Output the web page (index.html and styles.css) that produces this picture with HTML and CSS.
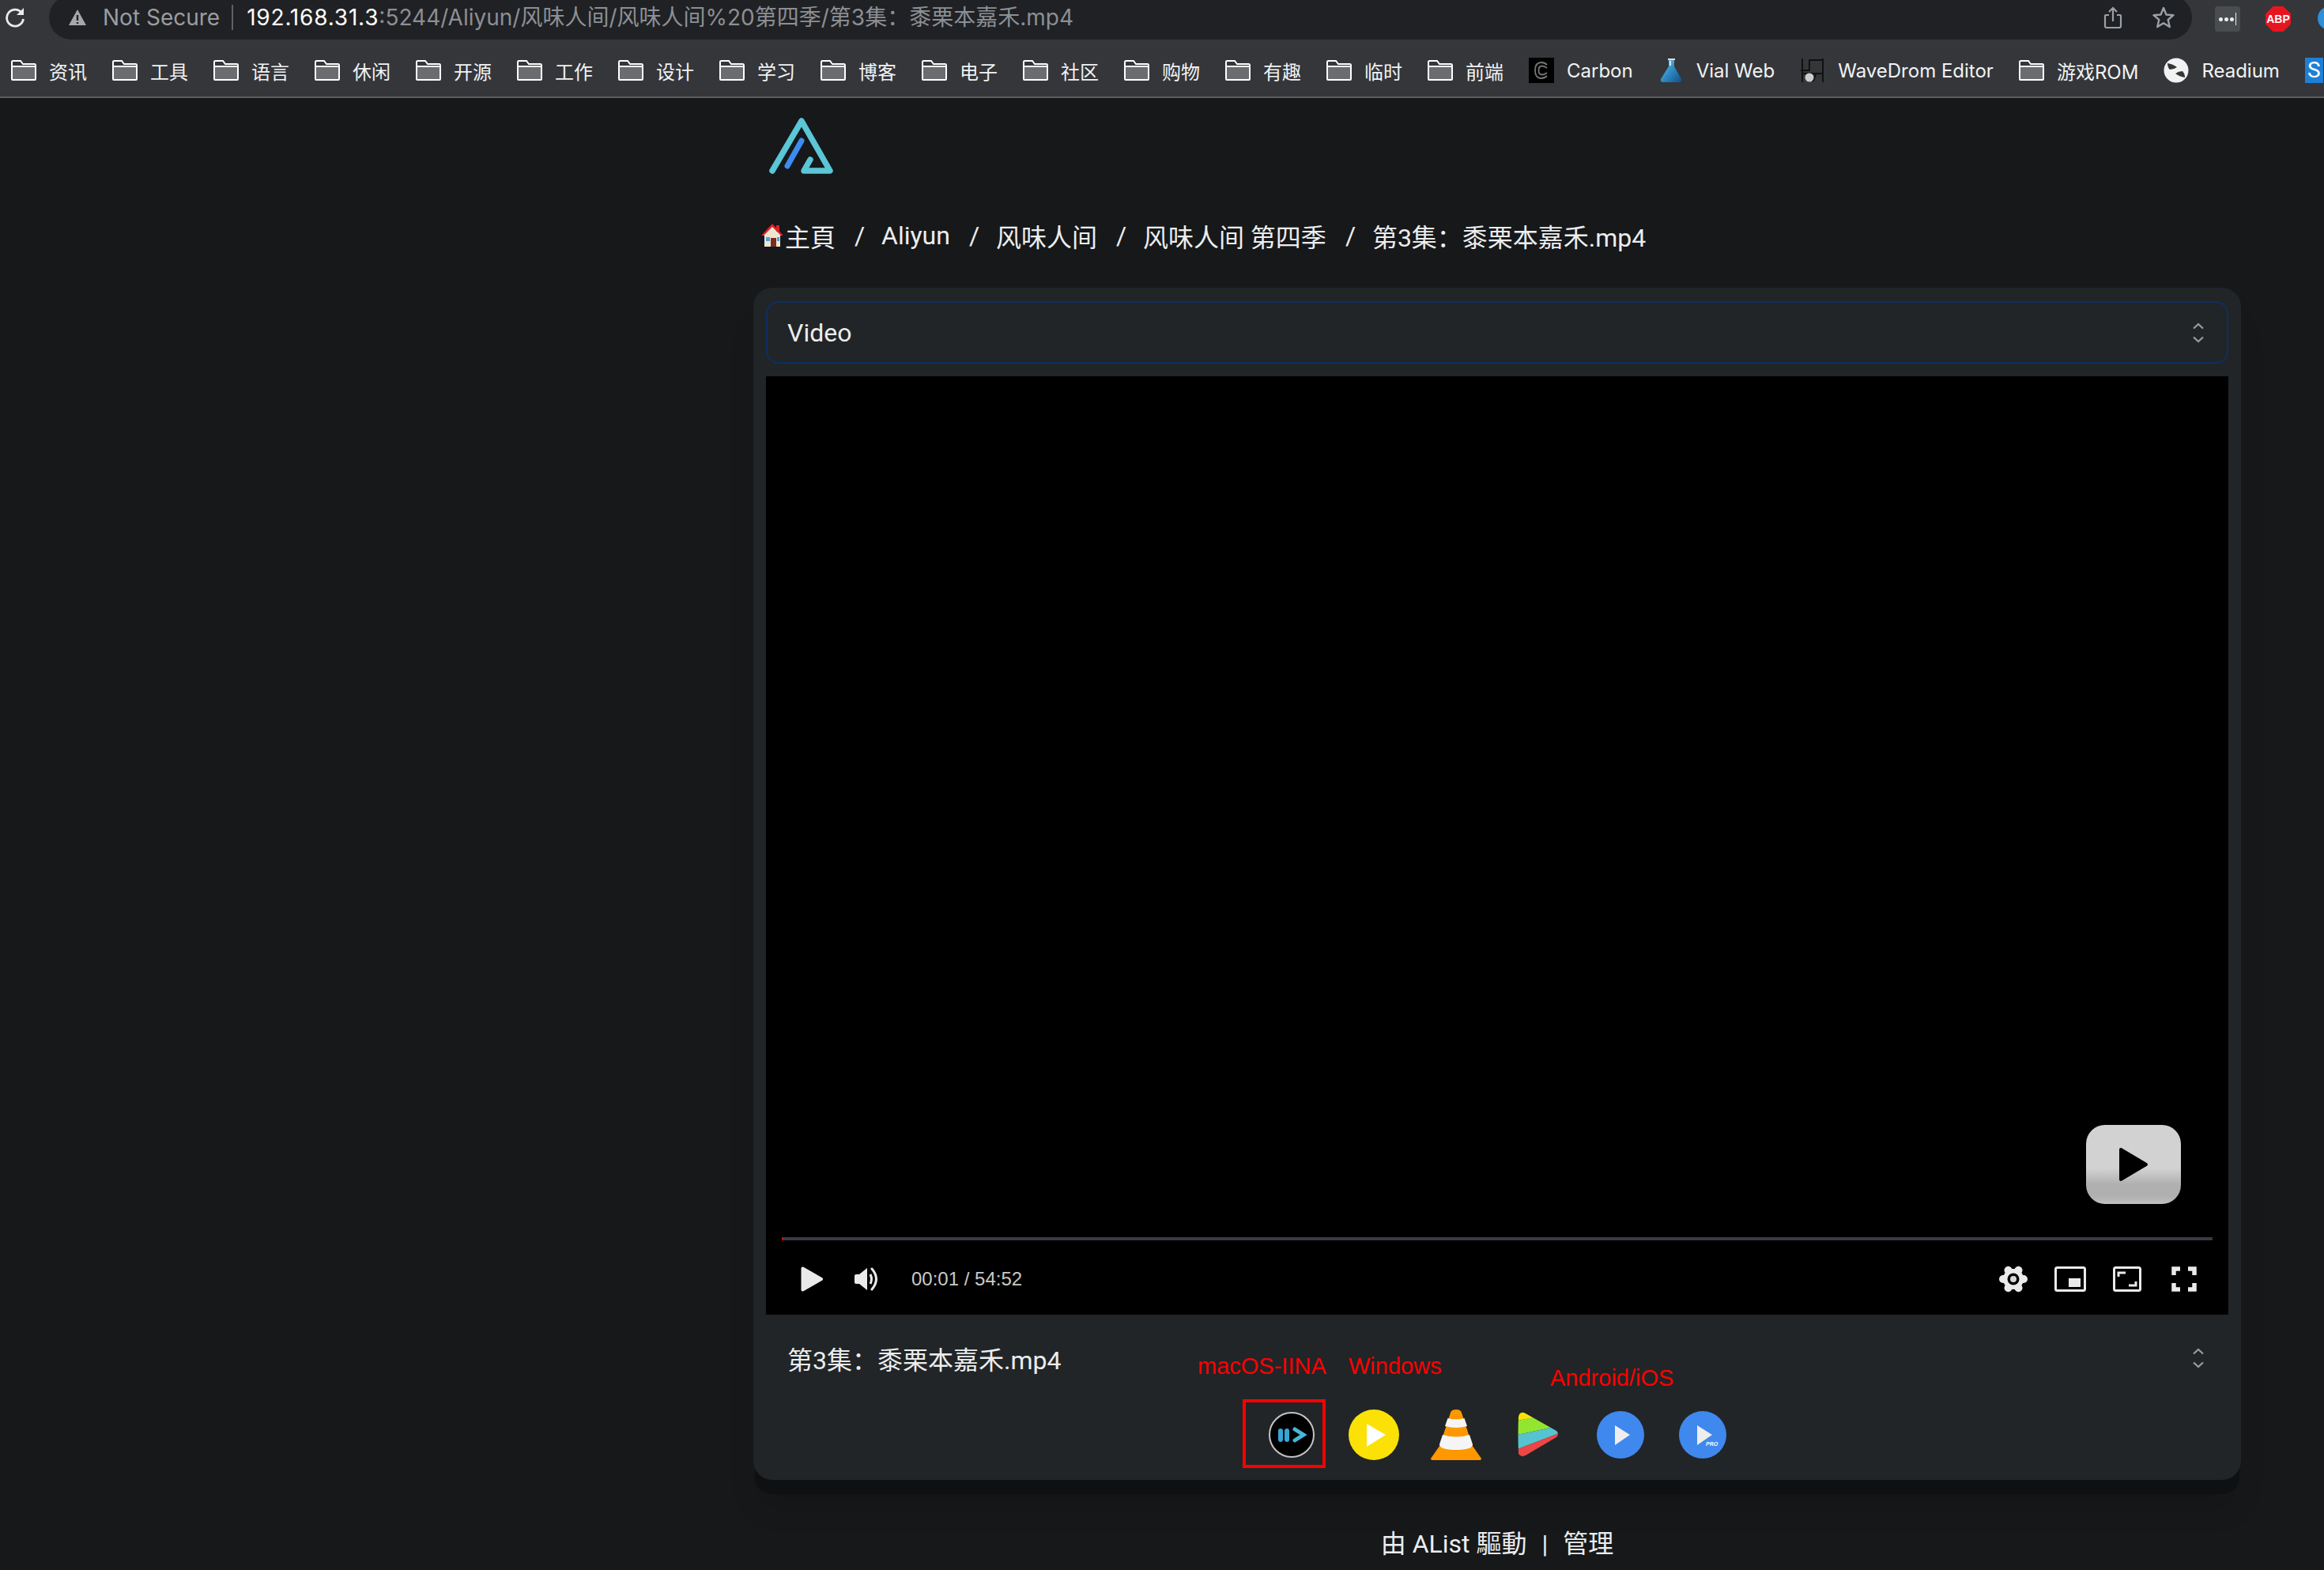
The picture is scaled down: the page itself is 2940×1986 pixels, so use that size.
FILE: index.html
```html
<!DOCTYPE html>
<html lang="zh">
<head>
<meta charset="utf-8">
<title>第3集：黍栗本嘉禾.mp4</title>
<link rel="stylesheet" href="styles.css">
</head>
<body>
<svg class="defs" width="0" height="0" aria-hidden="true">
  <defs>
    <symbol id="folder" viewBox="0 0 32 26">
      <path d="M1 8V2.500Q1 1 2.500 1H12L15 5H30Q31 5 31 6.500V24Q31 25 30 25H2Q1 25 1 24Z" fill="none" stroke="#fff" stroke-width="2"/>
      <path d="M2 9H30V24H2Z" fill="#6b6c6f"/>
      <path d="M1 8H31" stroke="#fff" stroke-width="2"/>
    </symbol>
    <symbol id="updown" viewBox="0 0 16 26">
      <path d="M2 7.500L8 2L14 7.500M2 18.500L8 24L14 18.500" fill="none" stroke="#9b9c9e" stroke-width="2.200"/>
    </symbol>
    <linearGradient id="flaskfill" x1="0" y1="0" x2="1" y2="1">
      <stop offset="0" stop-color="#8fd0e8"/>
      <stop offset=".5" stop-color="#2f8cc4"/>
      <stop offset="1" stop-color="#124f8a"/>
    </linearGradient>
    <clipPath id="storeclip">
      <path d="M2 3Q5 -1 10 2L49 24Q53 28 49 32L10 55Q4 58 1 53Q0 30 1 6Z"/>
    </clipPath>
  </defs>
</svg>

<header class="toolbar">
  <svg class="reload" width="26" height="26" viewBox="0 0 26 26"><path d="M22 8A10.500 10.500 0 1 0 23.500 15" fill="none" stroke="#e8eaed" stroke-width="2.800"/><path d="M24 1V10H15Z" fill="#e8eaed"/></svg>
  <div class="pill">
    <svg class="warn" width="24" height="22" viewBox="0 0 24 22"><path d="M12 1L23 21H1Z" fill="#a5a7aa"/><path d="M12 8V15M12 17V19" stroke="#202124" stroke-width="2.400"/></svg>
    <span class="not-secure">Not Secure</span>
    <span class="url"><b class="host">192.168.31.3</b>:5244/Aliyun/风味人间/风味人间%20第四季/第3集：黍栗本嘉禾.mp4</span>
    <svg class="share" width="24" height="28" viewBox="0 0 24 28"><path d="M7 11H3Q2 11 2 12V25Q2 27 4 27H20Q22 27 22 25V12Q22 11 21 11H17M12 19V2M7 7L12 2L17 7" fill="none" stroke="#9aa0a6" stroke-width="2.200"/></svg>
    <svg class="star" width="28" height="28" viewBox="0 0 28 28"><path d="M14 2L17.500 10.500L26.500 11.200L19.700 17L21.800 26L14 21.200L6.200 26L8.300 17L1.500 11.200L10.500 10.500Z" fill="none" stroke="#9aa0a6" stroke-width="2.400" stroke-linejoin="round"/></svg>
  </div>
  <div class="ext-more"><i></i><i></i><i></i><s></s></div>
  <div class="ext-abp">ABP</div>
  <div class="ext-globe"></div>
</header>

<nav class="bookmarks">
  <a class="bm"><svg width="32" height="26"><use href="#folder"/></svg>资讯</a>
  <a class="bm"><svg width="32" height="26"><use href="#folder"/></svg>工具</a>
  <a class="bm"><svg width="32" height="26"><use href="#folder"/></svg>语言</a>
  <a class="bm"><svg width="32" height="26"><use href="#folder"/></svg>休闲</a>
  <a class="bm"><svg width="32" height="26"><use href="#folder"/></svg>开源</a>
  <a class="bm"><svg width="32" height="26"><use href="#folder"/></svg>工作</a>
  <a class="bm"><svg width="32" height="26"><use href="#folder"/></svg>设计</a>
  <a class="bm"><svg width="32" height="26"><use href="#folder"/></svg>学习</a>
  <a class="bm"><svg width="32" height="26"><use href="#folder"/></svg>博客</a>
  <a class="bm"><svg width="32" height="26"><use href="#folder"/></svg>电子</a>
  <a class="bm"><svg width="32" height="26"><use href="#folder"/></svg>社区</a>
  <a class="bm"><svg width="32" height="26"><use href="#folder"/></svg>购物</a>
  <a class="bm"><svg width="32" height="26"><use href="#folder"/></svg>有趣</a>
  <a class="bm"><svg width="32" height="26"><use href="#folder"/></svg>临时</a>
  <a class="bm"><svg width="32" height="26"><use href="#folder"/></svg>前端</a>
  <a class="bm"><svg width="32" height="32" viewBox="0 0 32 32"><rect width="32" height="32" fill="#000"/><path d="M23 9Q20 6 16 6Q8 6 8 16Q8 26 16 26Q20 26 23 23M23 13Q20 10.500 16.500 10.500Q12.500 10.500 12.500 16Q12.500 21.500 16.500 21.500Q20 21.500 23 19" fill="none" stroke="#777" stroke-width="1.800"/></svg>Carbon</a>
  <a class="bm"><svg width="32" height="32" viewBox="0 0 32 32"><path d="M12 1H21V3H20V11L29 27Q30 31 26 31H6Q2 31 3 27L13 11V3H12Z" fill="url(#flaskfill)"/><path d="M12 1H21V3H12Z" fill="#ddd"/><path d="M14 4H16V10H14Z" fill="#cfe9f2"/></svg>Vial Web</a>
  <a class="bm"><svg width="32" height="32" viewBox="0 0 32 32"><path d="M3 1V31M29 1V31M1 16H12V3H29M3 20H29M13 20L20 21L17 29H11" fill="none" stroke="#111" stroke-width="2"/><circle cx="12" cy="25" r="5.500" fill="#ccc"/></svg>WaveDrom Editor</a>
  <a class="bm"><svg width="32" height="26"><use href="#folder"/></svg>游戏ROM</a>
  <a class="bm"><svg width="32" height="32" viewBox="0 0 32 32"><circle cx="16" cy="16" r="15.500" fill="#f2f2f2"/><path d="M5 7Q12 8 17 12Q13 15 8 15Q5 12 5 7ZM27 25Q20 24 15 20Q19 17 24 17Q27 20 27 25Z" fill="#35363a"/></svg>Readium</a>
  <span class="s-icon">S</span>
</nav>

<main class="main">
  <svg class="logo" width="100" height="80" viewBox="0 0 100 80">
    <path d="M4 71L41 8L77 71H44L52 57" fill="none" stroke="#5ac6d6" stroke-width="7.500" stroke-linecap="round" stroke-linejoin="round"/>
    <path d="M41 33L23 65" fill="none" stroke="#3d8df0" stroke-width="7" stroke-linecap="round"/>
  </svg>

  <div class="crumbs">
    <a class="crumb crumb-home">
      <svg width="32" height="32" viewBox="0 0 32 32"><path d="M16 2L29 16H26V30H6V16H3Z" fill="#efe6cf"/><path d="M16 1L30 16L27 16L16 5L5 16L2 16Z" fill="#d8232a"/><rect x="21" y="3" width="4" height="8" fill="#d8232a"/><rect x="14" y="19" width="7" height="11" fill="#7a2c24"/><rect x="8" y="18" width="5" height="5" fill="#4aa3df"/><rect x="22" y="18" width="3" height="5" fill="#4aa3df"/></svg>主頁</a>
    <span class="sep">/</span>
    <a class="crumb">Aliyun</a>
    <span class="sep">/</span>
    <a class="crumb">风味人间</a>
    <span class="sep">/</span>
    <a class="crumb">风味人间 第四季</a>
    <span class="sep">/</span>
    <a class="crumb">第3集：黍栗本嘉禾.mp4</a>
  </div>

  <section class="card">
    <div class="select">
      <span>Video</span>
      <svg width="16" height="26"><use href="#updown"/></svg>
    </div>

    <div class="video">
      <div class="big-play">
        <svg width="38" height="44" viewBox="0 0 38 44"><path d="M3 3L35 22L3 41Z" fill="#000" stroke="#000" stroke-width="4" stroke-linejoin="round"/></svg>
      </div>
      <div class="progress"><i class="progress-done"></i></div>
      <div class="controls">
        <svg width="28" height="32" viewBox="0 0 28 32"><path d="M2.500 2.500L26 16L2.500 29.500Z" fill="#eaeaea" stroke="#eaeaea" stroke-width="4" stroke-linejoin="round"/></svg>
        <svg width="32" height="32" viewBox="0 0 32 32"><path d="M0 12Q0 10 2 10H6L16 2V30L6 22H2Q0 22 0 20Z" fill="#eaeaea"/><path d="M20 10Q23 16 20 22" fill="none" stroke="#eaeaea" stroke-width="3"/><path d="M22 3Q33 16 22 29" fill="none" stroke="#eaeaea" stroke-width="3" stroke-linecap="round"/></svg>
        <span class="time">00:01 / 54:52</span>
        <div class="ctrl-right">
          <svg width="36" height="34" viewBox="0 0 36 34">
            <g fill="#eaeaea"><circle cx="18" cy="17" r="13"/><rect x="0" y="12" width="36" height="10" rx="5"/><rect x="0" y="12" width="36" height="10" rx="5" transform="rotate(60 18 17)"/><rect x="0" y="12" width="36" height="10" rx="5" transform="rotate(120 18 17)"/></g>
            <circle cx="18" cy="17" r="7.500" fill="#000"/><circle cx="18" cy="17" r="4" fill="#d8d8d8"/>
          </svg>
          <svg width="40" height="32" viewBox="0 0 40 32"><rect x="1.500" y="1.500" width="37" height="29" rx="2" fill="none" stroke="#eaeaea" stroke-width="3"/><rect x="18" y="15" width="15" height="11" fill="#eaeaea"/></svg>
          <svg width="36" height="32" viewBox="0 0 36 32"><rect x="1.500" y="1.500" width="33" height="29" rx="2" fill="none" stroke="#eaeaea" stroke-width="3"/><path d="M7 13V8H16M29 19V24H20" fill="none" stroke="#eaeaea" stroke-width="3"/></svg>
          <svg class="fs" width="32" height="32" viewBox="0 0 32 32"><path d="M3 11V3H11M21 3H29V11M29 21V29H21M11 29H3V21" fill="none" stroke="#eaeaea" stroke-width="5.500"/></svg>
        </div>
      </div>
    </div>

    <div class="title-row">
      <span>第3集：黍栗本嘉禾.mp4</span>
      <svg width="16" height="26"><use href="#updown"/></svg>
    </div>

    <div class="players">
      <span class="note note-iina">macOS-IINA</span>
      <span class="note note-win">Windows</span>
      <span class="note note-mobile">Android/iOS</span>
      <a class="player player-iina">
        <svg width="64" height="64" viewBox="0 0 64 64"><circle cx="32" cy="32" r="28" fill="#000" stroke="#c4c4c4" stroke-width="2"/><path d="M18 27V38M26 27V38" stroke="#37a5d5" stroke-width="6" stroke-linecap="round"/><path d="M36 25L47 32L36 39" fill="none" stroke="#45b8d8" stroke-width="5" stroke-linecap="round"/></svg>
      </a>
      <a class="player">
        <svg width="64" height="64" viewBox="0 0 64 64"><circle cx="32" cy="32" r="32" fill="#fbe106"/><path d="M23 18L47 32L23 47Z" fill="#fff"/></svg>
      </a>
      <a class="player">
        <svg width="64" height="64" viewBox="0 0 64 64"><path d="M14 42H50L64 62Q64 64 62 64H2Q0 64 0 62Z" fill="#ff9800"/><path d="M25 4Q26 0 32 0Q38 0 39 4L53 47Q50 51 32 51Q14 51 11 47Z" fill="#ff9800"/><path d="M21.500 11Q32 14 42.500 11L46 21Q32 25 18 21Z" fill="#f5f5f5"/><path d="M15 32Q32 37 49 32L53 44Q53 51 32 51Q11 51 11 44Z" fill="#f5f5f5"/></svg>
      </a>
      <a class="player">
        <svg width="52" height="58" viewBox="0 0 52 58"><g clip-path="url(#storeclip)"><path d="M0 0H60L0 11Z" fill="#fbe106"/><path d="M0 11L60 -1V16L0 29Z" fill="#93e62f"/><path d="M0 29L60 16V24L0 47Z" fill="#56c4d0"/><path d="M0 47L60 24V58H0Z" fill="#ee4545"/></g></svg>
      </a>
      <a class="player">
        <svg width="60" height="60" viewBox="0 0 60 60"><circle cx="30" cy="30" r="30" fill="#3f88ee"/><path d="M23 18L42 30L23 43Z" fill="#eee"/></svg>
      </a>
      <a class="player">
        <svg width="60" height="60" viewBox="0 0 60 60"><circle cx="30" cy="30" r="30" fill="#3f88ee"/><path d="M23 18L42 30L23 43Z" fill="#eee"/><text class="pro" x="34" y="44">PRO</text></svg>
      </a>
    </div>
  </section>

  <footer class="footer">由 AList 驅動<span class="pipe">|</span>管理</footer>
</main>
</body>
</html>
```
FILE: styles.css
```css
*, *::after { box-sizing: border-box; }
html, body { margin: 0; padding: 0; height: 100%; }
body {
  background: #16181a;
  color: #ecedee;
  font-family: Inter, "Noto Sans CJK SC", sans-serif;
  overflow: hidden;
}
.defs { position: absolute; }
svg { display: block; flex: none; }

/* browser toolbar */
.toolbar {
  height: 50px;
  background: #35363a;
  display: flex;
  align-items: flex-end;
  padding-left: 6px;
  overflow: hidden;
}
.reload { align-self: flex-start; margin-top: 9px; }
.pill {
  flex: none;
  width: 2711px;
  height: 56px;
  margin-left: 30px;
  margin-top: -6px;
  border-radius: 28px;
  background: #202124;
  display: flex;
  align-items: center;
  padding: 0 22px 0 24px;
  font-size: 28px;
}
.warn { margin-right: 20px; }
.not-secure {
  color: #9a9da1;
  padding-right: 15px;
  border-right: 2px solid #5f6164;
  margin-right: 17px;
  line-height: 32px;
}
.url { color: #8c8f94; white-space: nowrap; flex: 1; line-height: 32px; }
.host { color: #fff; font-weight: 400; letter-spacing: .8px; }
.share { margin-right: 38px; }
.ext-more {
  flex: none;
  width: 32px;
  height: 32px;
  margin: 0 0 10px 29px;
  border-radius: 4px;
  background: #4a4d50;
  display: flex;
  align-items: center;
  justify-content: center;
  gap: 2px;
}
.ext-more i { width: 5px; height: 5px; border-radius: 50%; background: #eee; }
.ext-more s { width: 1px; height: 16px; background: #eee; }
.ext-abp {
  flex: none;
  width: 32px;
  height: 32px;
  margin: 0 0 10px 32px;
  background: #e8151f;
  clip-path: polygon(30% 0, 70% 0, 100% 30%, 100% 70%, 70% 100%, 30% 100%, 0 70%, 0 30%);
  color: #fff;
  font: 700 14px/32px "Liberation Sans", sans-serif;
  text-align: center;
}
.ext-globe {
  flex: none;
  width: 30px;
  height: 30px;
  margin: 0 0 12px 34px;
  border-radius: 50%;
  background: #2f8fd8;
}

/* bookmarks bar */
.bookmarks {
  height: 74px;
  background: #35363a;
  border-bottom: 2px solid #5c5d60;
  display: flex;
  align-items: center;
  gap: 32px;
  padding: 6px 0 0 14px;
  overflow: hidden;
  font-size: 24px;
  color: #f1f3f4;
  white-space: nowrap;
}
.bm { display: flex; align-items: center; gap: 16px; flex: none; }
.s-icon {
  flex: none;
  width: 23px;
  height: 32px;
  padding-left: 3px;
  background: #1f7fd6;
  color: #fff;
  font: 28px/32px Roboto, sans-serif;
}

/* page */
.main {
  width: 1882px;
  margin-left: 953px;
  font-family: Roboto, "Noto Sans CJK SC", sans-serif;
}
.logo { margin: 21px 0 0 20px; }
.crumbs {
  display: flex;
  align-items: center;
  height: 40px;
  margin: 53px 0 0 8px;
  font-size: 32px;
  white-space: nowrap;
  gap: 24px;
}
.crumb-home { display: flex; align-items: center; }
.sep { width: 10px; text-align: center; }

.card {
  margin-top: 46px;
  padding: 17px 16px 24px;
  height: 1508px;
  border-radius: 24px;
  background: #212527;
  box-shadow: 0 20px 0 -2px #0e1012, 0 40px 40px -10px rgba(0, 0, 0, .15);
}
.select {
  height: 79px;
  border: 2px solid #0f2f5f;
  border-radius: 16px;
  display: flex;
  align-items: center;
  justify-content: space-between;
  padding: 0 28px 0 25px;
  font-size: 32px;
}
.video {
  position: relative;
  margin-top: 16px;
  height: 1187px;
  background: #000;
  display: flex;
  flex-direction: column;
  justify-content: flex-end;
}
.big-play {
  position: absolute;
  right: 60px;
  top: 947px;
  width: 120px;
  height: 100px;
  border-radius: 24px;
  background: linear-gradient(#d2d2d2 0%, #d2d2d2 55%, #b0b0b0 75%, #b0b0b0 90%, #c0c0c0 100%);
  display: flex;
  align-items: center;
  justify-content: center;
}
.progress { height: 4px; margin: 0 20px; background: #3a3a40; }
.progress-done { display: block; width: 2px; height: 4px; background: #d0021b; }
.controls {
  height: 94px;
  padding: 4px 40px 0 44px;
  display: flex;
  align-items: center;
  gap: 40px;
}
.controls .time {
  font: 24px "Liberation Sans", sans-serif;
  color: #c9c9c9;
}
.ctrl-right {
  margin-left: auto;
  display: flex;
  align-items: center;
  gap: 34px;
}
.fs { margin-left: 4px; }

.title-row {
  margin-top: 35px;
  height: 40px;
  display: flex;
  align-items: center;
  justify-content: space-between;
  padding: 0 30px 0 27px;
  font-size: 32px;
}

.players {
  position: relative;
  margin-top: 45px;
  display: flex;
  justify-content: center;
  gap: 40px;
}
.player {
  position: relative;
  width: 64px;
  height: 64px;
  display: flex;
  align-items: center;
  justify-content: center;
}
.player-iina::after {
  content: "";
  position: absolute;
  left: -30px;
  top: -13px;
  width: 105px;
  height: 87px;
  border: 4px solid #f00;
}
.note {
  position: absolute;
  color: #f00;
  font: 29px/40px "Liberation Sans", sans-serif;
  white-space: nowrap;
}
.note-iina { left: 546px; top: -75px; }
.note-win { left: 737px; top: -75px; }
.note-mobile { left: 992px; top: -60px; }
.pro { font: italic 700 7px "Liberation Sans", sans-serif; fill: #fff; }

.footer {
  margin-top: 61px;
  height: 40px;
  line-height: 40px;
  text-align: center;
  font-size: 32px;
}
.pipe { margin: 0 19px; }
```
